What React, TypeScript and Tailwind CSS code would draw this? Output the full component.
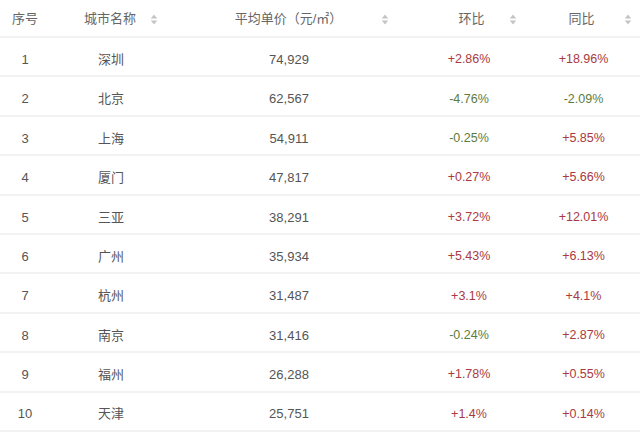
import React from 'react';

const rows = [
  { id: 1, city: '深圳', price: '74,929', mom: '+2.86%', yoy: '+18.96%' },
  { id: 2, city: '北京', price: '62,567', mom: '-4.76%', yoy: '-2.09%' },
  { id: 3, city: '上海', price: '54,911', mom: '-0.25%', yoy: '+5.85%' },
  { id: 4, city: '厦门', price: '47,817', mom: '+0.27%', yoy: '+5.66%' },
  { id: 5, city: '三亚', price: '38,291', mom: '+3.72%', yoy: '+12.01%' },
  { id: 6, city: '广州', price: '35,934', mom: '+5.43%', yoy: '+6.13%' },
  { id: 7, city: '杭州', price: '31,487', mom: '+3.1%', yoy: '+4.1%' },
  { id: 8, city: '南京', price: '31,416', mom: '-0.24%', yoy: '+2.87%' },
  { id: 9, city: '福州', price: '26,288', mom: '+1.78%', yoy: '+0.55%' },
  { id: 10, city: '天津', price: '25,751', mom: '+1.4%', yoy: '+0.14%' },
];

function SortIcon() {
  return (
    <svg width="8" height="11" viewBox="0 0 8 11" className="shrink-0">
      <path d="M4 0.5 L7.2 4.5 H0.8 Z" fill="#c4c4c4" />
      <path d="M4 10.5 L7.2 6.5 H0.8 Z" fill="#c4c4c4" />
    </svg>
  );
}

const color = (v: string) => (v.startsWith('-') ? 'text-[#5d7b3c]' : 'text-[#a93a42]');

export default function App() {
  return (
    <div
      className="w-[640px] h-[434px] overflow-hidden bg-white text-[13px] text-[#555]"
      style={{ fontFamily: '"Liberation Sans", "Noto Sans CJK SC", sans-serif' }}
    >
      {/* Header */}
      <div className="grid grid-cols-[50px_122px_232px_124px_112px] h-[38px] pt-[2px] items-center border-b-2 border-[#f2f2f2] text-[#666]">
        <div className="text-center">序号</div>
        <div className="flex items-center pl-[20px] pr-[14px]">
          <span className="flex-1 text-center">城市名称</span>
          <SortIcon />
        </div>
        <div className="flex items-center pl-[24px] pr-[15px]">
          <span className="flex-1 text-center">平均单价（元/㎡）</span>
          <SortIcon />
        </div>
        <div className="flex items-center pl-[30px] pr-[11px]">
          <span className="flex-1 text-center">环比</span>
          <SortIcon />
        </div>
        <div className="flex items-center pl-[11px] pr-[8px]">
          <span className="flex-1 text-center">同比</span>
          <SortIcon />
        </div>
      </div>

      {/* Body */}
      {rows.map((r) => (
        <div
          key={r.id}
          className="grid grid-cols-[50px_122px_232px_124px_112px] h-[39.4px] pt-[6px] items-center border-b-2 border-[#f2f2f2]"
        >
          <div className="text-center">{r.id}</div>
          <div className="text-center">{r.city}</div>
          <div className="text-center pl-[2px]">{r.price}</div>
          <div className={`text-center pl-[6px] text-[12.5px] ${color(r.mom)}`}>{r.mom}</div>
          <div className={`text-center pr-[1px] text-[12.5px] ${color(r.yoy)}`}>{r.yoy}</div>
        </div>
      ))}
    </div>
  );
}
